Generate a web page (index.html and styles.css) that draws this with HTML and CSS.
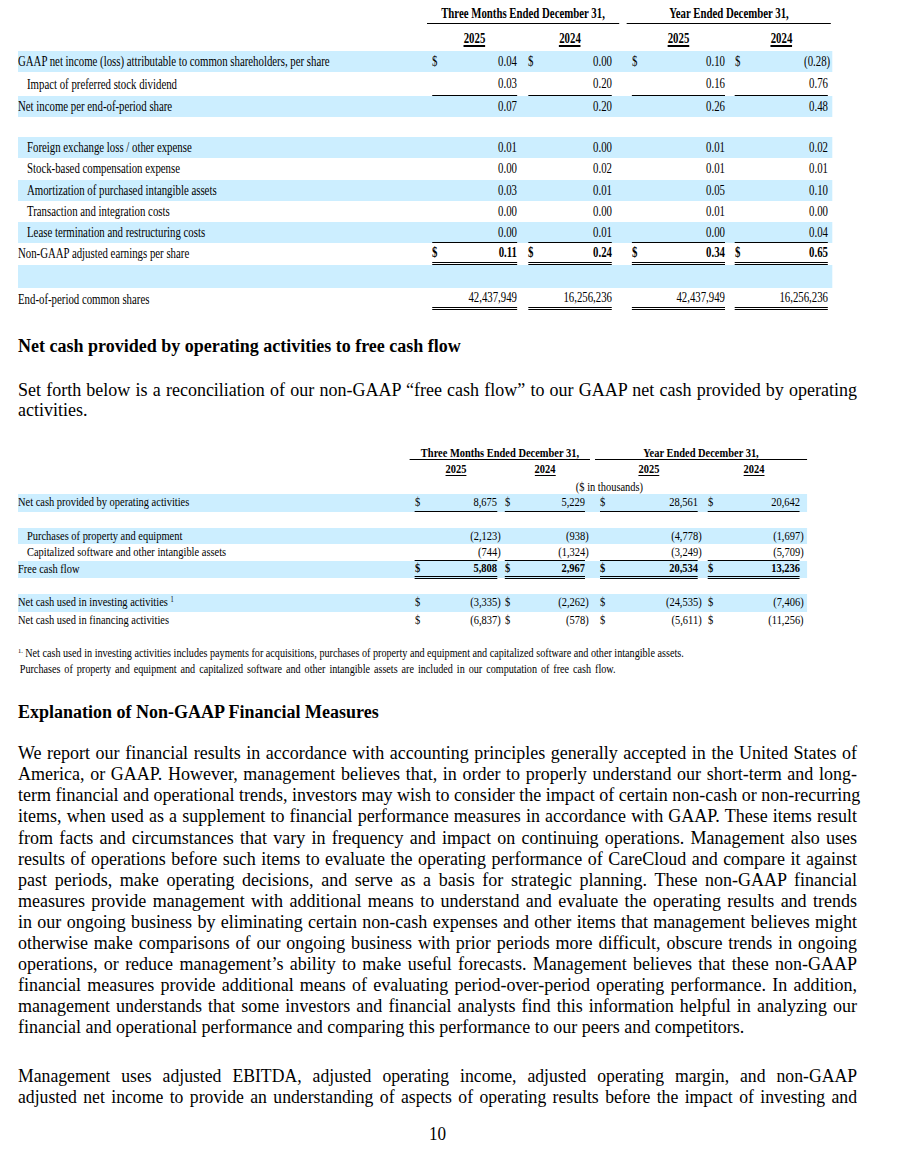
FILE: index.html
```html
<!DOCTYPE html>
<html lang="en">
<head>
<meta charset="utf-8">
<title>Non-GAAP Reconciliation</title>
<link rel="stylesheet" href="styles.css">
</head>
<body>
<main class="page">

  <section class="tbl-wrap">
    <div class="tbl t1">
      <div class="row head">
        <div class="lbl"></div>
        <div class="span2 h-three"><div class="hline">Three Months Ended December 31,</div></div>
        <div class="span2 h-year"><div class="hline">Year Ended December 31,</div></div>
      </div>
      <div class="row years">
        <div class="lbl"></div>
        <div class="yc c1"><span>2025</span></div>
        <div class="yc c2"><span>2024</span></div>
        <div class="yc c3"><span>2025</span></div>
        <div class="yc c4"><span>2024</span></div>
      </div>

      <div class="row bl">
        <div class="lbl">GAAP net income (loss) attributable to common shareholders, per share</div>
        <div class="v c1"><span>$</span><span>0.04</span></div>
        <div class="v c2"><span>$</span><span>0.00</span></div>
        <div class="v c3"><span>$</span><span>0.10</span></div>
        <div class="v c4"><span>$</span><span class="neg">(0.28)</span></div>
      </div>
      <div class="row r235">
        <div class="lbl ind">Impact of preferred stock dividend</div>
        <div class="v c1 u"><span></span><span>0.03</span></div>
        <div class="v c2 u"><span></span><span>0.20</span></div>
        <div class="v c3 u"><span></span><span>0.16</span></div>
        <div class="v c4 u"><span></span><span>0.76</span></div>
      </div>
      <div class="row bl">
        <div class="lbl">Net income per end-of-period share</div>
        <div class="v c1"><span></span><span>0.07</span></div>
        <div class="v c2"><span></span><span>0.20</span></div>
        <div class="v c3"><span></span><span>0.26</span></div>
        <div class="v c4"><span></span><span>0.48</span></div>
      </div>
      <div class="row r20"></div>
      <div class="row bl">
        <div class="lbl ind">Foreign exchange loss / other expense</div>
        <div class="v c1"><span></span><span>0.01</span></div>
        <div class="v c2"><span></span><span>0.00</span></div>
        <div class="v c3"><span></span><span>0.01</span></div>
        <div class="v c4"><span></span><span>0.02</span></div>
      </div>
      <div class="row">
        <div class="lbl ind">Stock-based compensation expense</div>
        <div class="v c1"><span></span><span>0.00</span></div>
        <div class="v c2"><span></span><span>0.02</span></div>
        <div class="v c3"><span></span><span>0.01</span></div>
        <div class="v c4"><span></span><span>0.01</span></div>
      </div>
      <div class="row bl">
        <div class="lbl ind">Amortization of purchased intangible assets</div>
        <div class="v c1"><span></span><span>0.03</span></div>
        <div class="v c2"><span></span><span>0.01</span></div>
        <div class="v c3"><span></span><span>0.05</span></div>
        <div class="v c4"><span></span><span>0.10</span></div>
      </div>
      <div class="row">
        <div class="lbl ind">Transaction and integration costs</div>
        <div class="v c1"><span></span><span>0.00</span></div>
        <div class="v c2"><span></span><span>0.00</span></div>
        <div class="v c3"><span></span><span>0.01</span></div>
        <div class="v c4"><span></span><span>0.00</span></div>
      </div>
      <div class="row bl">
        <div class="lbl ind">Lease termination and restructuring costs</div>
        <div class="v c1 u"><span></span><span>0.00</span></div>
        <div class="v c2 u"><span></span><span>0.01</span></div>
        <div class="v c3 u"><span></span><span>0.00</span></div>
        <div class="v c4 u"><span></span><span>0.04</span></div>
      </div>
      <div class="row">
        <div class="lbl">Non-GAAP adjusted earnings per share</div>
        <div class="v c1 uu b"><span>$</span><span>0.11</span></div>
        <div class="v c2 uu b"><span>$</span><span>0.24</span></div>
        <div class="v c3 uu b"><span>$</span><span>0.34</span></div>
        <div class="v c4 uu b"><span>$</span><span>0.65</span></div>
      </div>
      <div class="row bl r235"></div>
      <div class="row r22">
        <div class="lbl">End-of-period common shares</div>
        <div class="v c1 uu"><span></span><span>42,437,949</span></div>
        <div class="v c2 uu"><span></span><span>16,256,236</span></div>
        <div class="v c3 uu"><span></span><span>42,437,949</span></div>
        <div class="v c4 uu"><span></span><span>16,256,236</span></div>
      </div>
    </div>
  </section>

  <h2 class="sec sec-1">Net cash provided by operating activities to free cash flow</h2>

  <p class="txt txt-1">
    <span class="ln">Set forth below is a reconciliation of our non-GAAP “free cash flow” to our GAAP net cash provided by operating</span>
    <span class="last">activities.</span>
  </p>

  <section class="tbl-wrap t2-wrap">
    <div class="tbl t2">
      <div class="row head">
        <div class="lbl"></div>
        <div class="span2 h-three"><div class="hline">Three Months Ended December 31,</div></div>
        <div class="span2 h-year"><div class="hline">Year Ended December 31,</div></div>
      </div>
      <div class="row years">
        <div class="lbl"></div>
        <div class="yc c1"><span>2025</span></div>
        <div class="yc c2"><span>2024</span></div>
        <div class="yc c3"><span>2025</span></div>
        <div class="yc c4"><span>2024</span></div>
      </div>
      <div class="row units">
        <div class="lbl"></div>
        <div class="span4">($ in thousands)</div>
      </div>

      <div class="row bl r18">
        <div class="lbl">Net cash provided by operating activities</div>
        <div class="v c1 u"><span>$</span><span>8,675</span></div>
        <div class="v c2 u"><span>$</span><span>5,229</span></div>
        <div class="v c3 u"><span>$</span><span>28,561</span></div>
        <div class="v c4 u"><span>$</span><span>20,642</span></div>
      </div>
      <div class="row r16"></div>
      <div class="row bl r165">
        <div class="lbl ind">Purchases of property and equipment</div>
        <div class="v c1"><span></span><span class="neg">(2,123)</span></div>
        <div class="v c2"><span></span><span class="neg">(938)</span></div>
        <div class="v c3"><span></span><span class="neg">(4,778)</span></div>
        <div class="v c4"><span></span><span class="neg">(1,697)</span></div>
      </div>
      <div class="row r165">
        <div class="lbl ind">Capitalized software and other intangible assets</div>
        <div class="v c1 u"><span></span><span class="neg">(744)</span></div>
        <div class="v c2 u"><span></span><span class="neg">(1,324)</span></div>
        <div class="v c3 u"><span></span><span class="neg">(3,249)</span></div>
        <div class="v c4 u"><span></span><span class="neg">(5,709)</span></div>
      </div>
      <div class="row bl">
        <div class="lbl">Free cash flow</div>
        <div class="v c1 uu b"><span>$</span><span>5,808</span></div>
        <div class="v c2 uu b"><span>$</span><span>2,967</span></div>
        <div class="v c3 uu b"><span>$</span><span>20,534</span></div>
        <div class="v c4 uu b"><span>$</span><span>13,236</span></div>
      </div>
      <div class="row r16"></div>
      <div class="row bl r18">
        <div class="lbl">Net cash used in investing activities <sup>1</sup></div>
        <div class="v c1"><span>$</span><span class="neg">(3,335)</span></div>
        <div class="v c2"><span>$</span><span class="neg">(2,262)</span></div>
        <div class="v c3"><span>$</span><span class="neg">(24,535)</span></div>
        <div class="v c4"><span>$</span><span class="neg">(7,406)</span></div>
      </div>
      <div class="row">
        <div class="lbl">Net cash used in financing activities</div>
        <div class="v c1"><span>$</span><span class="neg">(6,837)</span></div>
        <div class="v c2"><span>$</span><span class="neg">(578)</span></div>
        <div class="v c3"><span>$</span><span class="neg">(5,611)</span></div>
        <div class="v c4"><span>$</span><span class="neg">(11,256)</span></div>
      </div>
    </div>
  </section>

  <section class="tbl-wrap fn-wrap">
    <div class="fn">
      <span class="fl"><sup>1.</sup> Net cash used in investing activities includes payments for acquisitions, purchases of property and equipment and capitalized software and other intangible assets.</span>
      <span class="fl l2">Purchases of property and equipment and capitalized software and other intangible assets are included in our computation of free cash flow.</span>
    </div>
  </section>

  <h2 class="sec sec-2">Explanation of Non-GAAP Financial Measures</h2>

  <p class="txt txt-2">
    <span class="ln">We report our financial results in accordance with accounting principles generally accepted in the United States of</span>
    <span class="ln">America, or GAAP. However, management believes that, in order to properly understand our short-term and long-</span>
    <span class="ln">term financial and operational trends, investors may wish to consider the impact of certain non-cash or non-recurring</span>
    <span class="ln">items, when used as a supplement to financial performance measures in accordance with GAAP. These items result</span>
    <span class="ln">from facts and circumstances that vary in frequency and impact on continuing operations. Management also uses</span>
    <span class="ln">results of operations before such items to evaluate the operating performance of CareCloud and compare it against</span>
    <span class="ln">past periods, make operating decisions, and serve as a basis for strategic planning. These non-GAAP financial</span>
    <span class="ln">measures provide management with additional means to understand and evaluate the operating results and trends</span>
    <span class="ln">in our ongoing business by eliminating certain non-cash expenses and other items that management believes might</span>
    <span class="ln">otherwise make comparisons of our ongoing business with prior periods more difficult, obscure trends in ongoing</span>
    <span class="ln">operations, or reduce management’s ability to make useful forecasts. Management believes that these non-GAAP</span>
    <span class="ln">financial measures provide additional means of evaluating period-over-period operating performance. In addition,</span>
    <span class="ln">management understands that some investors and financial analysts find this information helpful in analyzing our</span>
    <span class="last">financial and operational performance and comparing this performance to our peers and competitors.</span>
  </p>

  <section class="tbl-wrap cond-wrap">
    <p class="cond">
      <span class="ln">Management uses adjusted EBITDA, adjusted operating income, adjusted operating margin, and non-GAAP</span>
      <span class="ln">adjusted net income to provide an understanding of aspects of operating results before the impact of investing and</span>
    </p>
  </section>

  <footer class="tbl-wrap pn-wrap">
    <div class="pn">10</div>
  </footer>

</main>
</body>
</html>
```

FILE: styles.css
```css
* { box-sizing: border-box; }

html, body {
  margin: 0;
  padding: 0;
  background: #ffffff;
}

body {
  font-family: "Liberation Serif", "Times New Roman", serif;
  color: #000;
}

.page {
  width: 900px;
  padding: 2px 43px 0 18px;
}

/* The source document uses horizontally narrow type: blocks are laid out
   at their natural width and then condensed with scaleX(var(--s)).
   Lengths below are written in page pixels and divided by --s. */
.tbl-wrap {
  overflow: hidden;
}

.tbl {
  transform: scaleX(var(--s));
  transform-origin: 0 0;
}

.row {
  display: grid;
}

.bl {
  background: #cceeff;
}

.lbl {
  align-self: center;
  white-space: nowrap;
}

.lbl.ind {
  padding-left: calc(9px / var(--s));
}

.v {
  display: flex;
  align-items: center;
  justify-content: space-between;
  white-space: nowrap;
}

.u {
  border-bottom: 1px solid #000;
}

.uu {
  border-bottom: 3px double #000;
}

.b {
  font-weight: bold;
}

.span2 {
  grid-column: span 2;
  display: flex;
  align-items: flex-end;
}

.hline {
  flex: 1;
  text-align: center;
  font-weight: bold;
  border-bottom: 1px solid #000;
  white-space: nowrap;
}

.yc {
  display: flex;
  justify-content: center;
  align-items: flex-start;
  font-weight: bold;
}

.yc span {
  display: inline-block;
}

sup {
  font-size: 0.62em;
  line-height: 0;
  vertical-align: 0.55em;
}

/* ---------- table 1 ---------- */
.t1 {
  --s: 0.745;
  width: calc(814px / var(--s));
  font-size: 14.5px;
}

.t1 .row {
  grid-template-columns:
    calc(412px / var(--s))
    calc(90px / var(--s))
    calc(95px / var(--s))
    calc(115px / var(--s))
    calc(102px / var(--s));
  height: 21.25px;
}

.t1 .head { height: 22px; }
.t1 .hline { line-height: 16px; padding-bottom: 2px; }
.t1 .h-three .hline { margin: 0 calc(-4px / var(--s)) 0 calc(-3px / var(--s)); }
.t1 .h-year .hline { margin: 0 calc(1px / var(--s)) 0 calc(12px / var(--s)); }

.t1 .years { height: 27px; }
.t1 .yc { padding-top: 7px; }
.t1 .yc span { line-height: 14px; border-bottom: 2px solid #000; }

.t1 .r20 { height: 20px; }
.t1 .r22 { height: 22px; }
.t1 .r235 { height: 23.5px; }

.t1 .c1 { margin: 0 calc(3px / var(--s)) 0 calc(2px / var(--s)); }
.t1 .c2 { margin: 0 calc(3px / var(--s)) 0 calc(8px / var(--s)); }
.t1 .c3 { margin: 0 calc(5px / var(--s)) 0 calc(17px / var(--s)); }
.t1 .c4 { margin: 0 calc(4px / var(--s)) 0 calc(5px / var(--s)); }

.t1 .neg { margin-right: -0.2em; }

/* ---------- headings & text ---------- */
.sec {
  margin: 0;
  font-size: 18px;
  line-height: 22px;
  font-weight: bold;
}

.sec-1 { margin-top: 24.75px; }
.sec-2 { margin-top: 24px; }

.txt {
  margin: 0;
  font-size: 18px;
  text-align: justify;
}

.txt-1 {
  margin-top: 22.75px;
  line-height: 20.5px;
}

.txt-2 {
  margin-top: 20.45px;
  line-height: 21.1px;
}

.ln {
  display: block;
  text-align: justify;
  text-align-last: justify;
  white-space: nowrap;
}

.last {
  display: block;
  white-space: nowrap;
}

/* ---------- table 2 ---------- */
.t2-wrap { margin-top: 26.25px; }

.t2 {
  --s: 0.835;
  width: calc(789px / var(--s));
  font-size: 12.5px;
}

.t2 .row {
  grid-template-columns:
    calc(394px / var(--s))
    calc(88px / var(--s))
    calc(88px / var(--s))
    calc(114px / var(--s))
    calc(105px / var(--s));
  height: 17px;
}

.t2 .head { height: 13px; }
.t2 .hline { line-height: 12px; }
.t2 .h-three .hline { margin: 0 calc(-2px / var(--s)) 0 calc(-2px / var(--s)); }
.t2 .h-year .hline { margin: 0 0 0 calc(7px / var(--s)); }

.t2 .years { height: 16px; }
.t2 .yc { padding-top: 3px; }
.t2 .yc span { line-height: 12px; border-bottom: 1.5px solid #000; }

.t2 .units {
  height: 13px;
  margin-top: 5px;
}

.span4 {
  grid-column: span 4;
  text-align: center;
  line-height: 13px;
}

.t2 .r16 { height: 16px; }
.t2 .r165 { height: 16.5px; }
.t2 .r18 { height: 18px; }

.t2 .c1 { margin: 0 calc(3px / var(--s)) 0 calc(3px / var(--s)); }
.t2 .c2 { margin: 0 calc(3px / var(--s)) 0 calc(5px / var(--s)); }
.t2 .c3 { margin: 0 calc(4px / var(--s)) 0 calc(12px / var(--s)); }
.t2 .c4 { margin: 0 calc(7px / var(--s)) 0 calc(6px / var(--s)); }

.t2 .neg { margin-right: -0.35em; }

/* ---------- footnote ---------- */
.fn-wrap { margin-top: 16px; }

.fn {
  --s: 0.883;
  width: calc(839px / var(--s));
  transform: scaleX(var(--s));
  transform-origin: 0 0;
  font-size: 11.5px;
  line-height: 16px;
}

.fl {
  display: block;
  white-space: nowrap;
}

.fl.l2 {
  padding-left: 2px;
  word-spacing: 1.6px;
}

/* ---------- condensed closing paragraph ---------- */
.cond-wrap { margin-top: 26.6px; }

.cond {
  --s: 0.93;
  margin: 0;
  width: calc(839px / var(--s));
  transform: scaleX(var(--s));
  transform-origin: 0 0;
  font-size: 19px;
  line-height: 21.1px;
}

.pn-wrap { margin-top: 15.35px; }

.pn {
  --s: 0.9;
  width: calc(839px / var(--s));
  transform: scaleX(var(--s));
  transform-origin: 0 0;
  font-size: 19px;
  line-height: 22px;
  text-align: center;
}
```
